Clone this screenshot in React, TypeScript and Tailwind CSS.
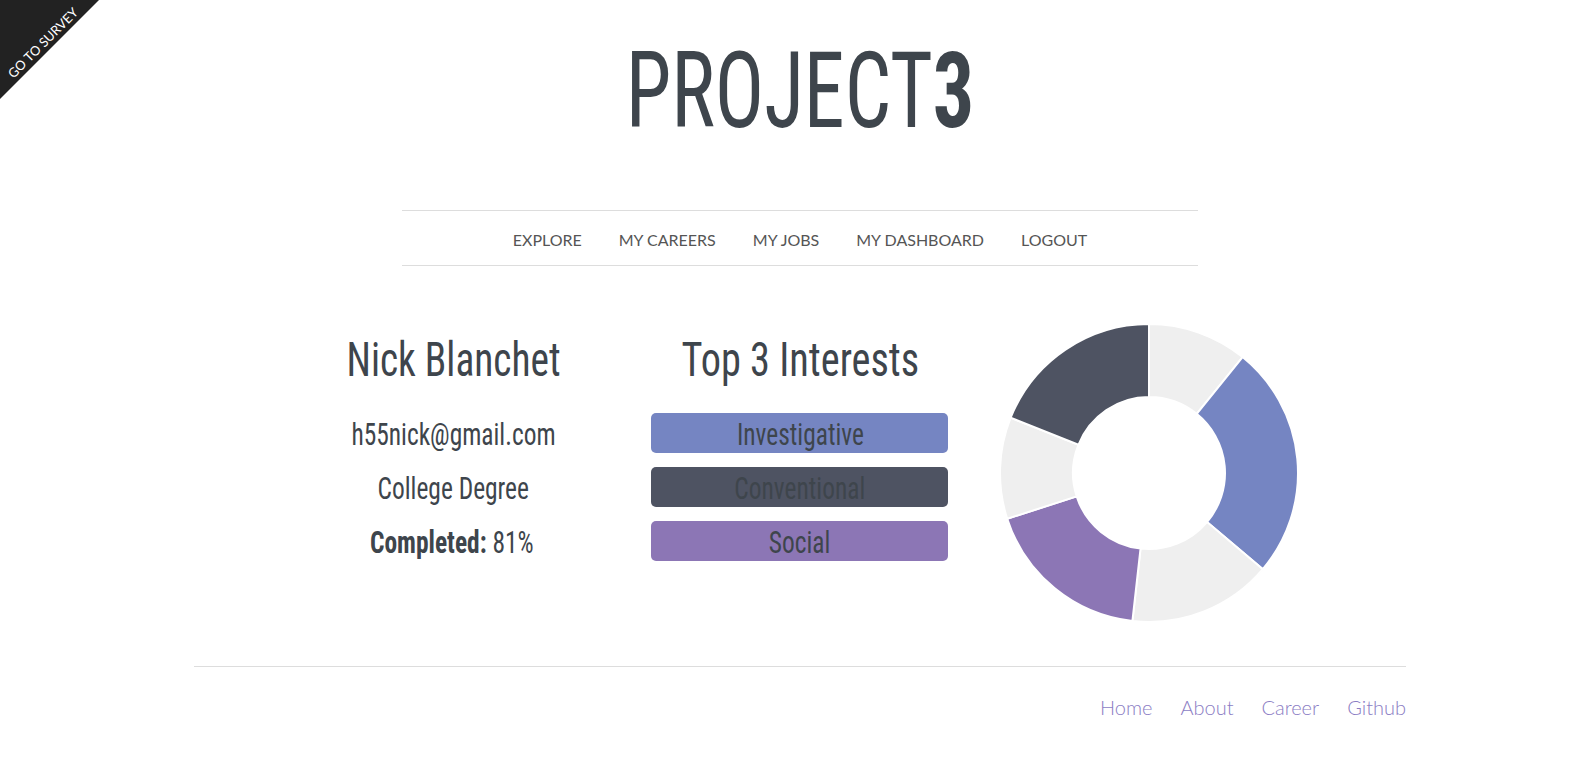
import { type ReactNode } from "react";

const NAV_LINKS = ["Explore", "My Careers", "My Jobs", "My Dashboard", "Logout"];
const FOOTER_LINKS = ["Home", "About", "Career", "Github"];

const INTERESTS = [
  { label: "Investigative", bg: "bg-[#7585c2]" },
  { label: "Conventional", bg: "bg-[#4e5362]" },
  { label: "Social", bg: "bg-[#8c76b5]" },
];

// donut slices, degrees clockwise from 12 o'clock
const SLICES = [
  { from: 0, to: 38.9, color: "#efefef" },
  { from: 38.9, to: 130.2, color: "#7585c2" },
  { from: 130.2, to: 186.4, color: "#efefef" },
  { from: 186.4, to: 252.1, color: "#8c76b5" },
  { from: 252.1, to: 291.8, color: "#efefef" },
  { from: 291.8, to: 360, color: "#4e5362" },
];

function pt(cx: number, cy: number, r: number, deg: number) {
  const a = ((deg - 90) * Math.PI) / 180;
  return [cx + r * Math.cos(a), cy + r * Math.sin(a)];
}

function slicePath(from: number, to: number, R: number, r: number) {
  const c = 150;
  const [x1, y1] = pt(c, c, R, from);
  const [x2, y2] = pt(c, c, R, to);
  const [x3, y3] = pt(c, c, r, to);
  const [x4, y4] = pt(c, c, r, from);
  const large = to - from > 180 ? 1 : 0;
  return `M${x1} ${y1} A${R} ${R} 0 ${large} 1 ${x2} ${y2} L${x3} ${y3} A${r} ${r} 0 ${large} 0 ${x4} ${y4} Z`;
}

function Narrow({ children, className = "" }: { children: ReactNode; className?: string }) {
  return <span className={`inline-block origin-center scale-x-[0.82] whitespace-nowrap ${className}`}>{children}</span>;
}

function Donut() {
  return (
    <svg width="300" height="300" viewBox="0 0 300 300">
      {SLICES.map((s, i) => (
        <path key={i} d={slicePath(s.from, s.to, 149, 76)} fill={s.color} stroke="#ffffff" strokeWidth="2" />
      ))}
    </svg>
  );
}

export default function App() {
  return (
    <div className="relative min-h-screen bg-white pl-[15px] text-[#3e454c] font-['Roboto_Condensed',sans-serif]">
      {/* Survey ribbon */}
      <a
        href="#survey"
        className="absolute left-0 top-0 z-10 block h-[99px] w-[99px] bg-[#222222] [clip-path:polygon(0_0,100%_0,0_100%)]"
      >
        <span className="absolute left-[43px] top-[43px] -translate-x-1/2 -translate-y-1/2 -rotate-45 whitespace-nowrap font-['Lato',sans-serif] text-[13px] leading-none text-white">
          GO TO SURVEY
        </span>
      </a>

      {/* Header */}
      <header className="pt-[38px] text-center">
        <h1 className="text-[106px] leading-none font-normal">
          <span className="inline-block origin-center scale-x-[0.775]">
            PROJECT<span className="font-bold">3</span>
          </span>
        </h1>
      </header>

      {/* Nav */}
      <nav className="mx-auto mt-[66px] flex h-[56px] w-[796px] items-center justify-center gap-[37px] border-y border-[#dddddd] pt-[3px] font-['Lato',sans-serif] text-[16px] uppercase text-[#555555]">
        {NAV_LINKS.map((link) => (
          <a key={link} href="#" className="hover:text-[#222]">
            {link}
          </a>
        ))}
      </nav>

      {/* Dashboard */}
      <main className="mx-auto mt-[57px] grid w-[1040px] grid-cols-3 items-start">
        <section className="flex flex-col items-center pt-[7px]">
          <h2 className="h-[60px] text-[48px] leading-[60px] font-normal">
            <Narrow>Nick Blanchet</Narrow>
          </h2>
          <div className="mt-[23px] flex flex-col gap-[14px] text-[31px]">
            <div className="flex h-[40px] items-center justify-center pt-1">
              <Narrow>h55nick@gmail.com</Narrow>
            </div>
            <div className="flex h-[40px] items-center justify-center pt-1">
              <Narrow>College Degree</Narrow>
            </div>
            <div className="flex h-[40px] items-center justify-center pt-1">
              <Narrow className="-ml-[4px]">
                <b className="font-bold">Completed:</b> 81%
              </Narrow>
            </div>
          </div>
        </section>

        <section className="flex flex-col items-center pt-[7px]">
          <h2 className="h-[60px] text-[48px] leading-[60px] font-normal">
            <Narrow className="scale-x-[0.84]">Top 3 Interests</Narrow>
          </h2>
          <div className="mt-[23px] flex w-[297px] flex-col gap-[14px] text-[31px]">
            {INTERESTS.map((item) => (
              <div key={item.label} className={`flex h-[40px] items-center justify-center rounded-[5px] pt-1 ${item.bg}`}>
                <Narrow>{item.label}</Narrow>
              </div>
            ))}
          </div>
        </section>

        <section className="flex justify-center pl-[4px]">
          <Donut />
        </section>
      </main>

      {/* Footer */}
      <footer className="mx-auto mt-[43px] flex w-[1212px] justify-end gap-[28px] border-t border-[#dddddd] pt-[25px] pb-[40px] font-['Lato',sans-serif] text-[20px] font-light text-[#8b7dc4]">
        {FOOTER_LINKS.map((link) => (
          <a key={link} href="#" className="hover:underline">
            {link}
          </a>
        ))}
      </footer>
    </div>
  );
}
